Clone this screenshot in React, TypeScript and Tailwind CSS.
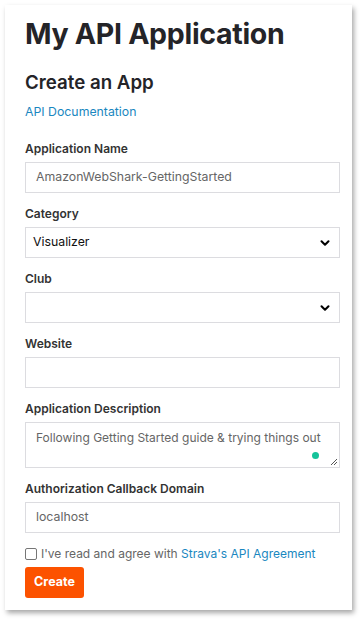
import { ChevronDown } from "lucide-react";

const Label = ({ children }: { children: React.ReactNode }) => (
  <label className="block text-[12px] leading-5 font-semibold text-[#333] mb-[3px]">{children}</label>
);

const Field = ({ label, children }: { label: string; children: React.ReactNode }) => (
  <div className="mb-[11px]">
    <Label>{label}</Label>
    {children}
  </div>
);

const inputCls =
  "w-full h-[31px] border border-[#dcdce0] bg-white px-[10px] text-[12.3px] text-[#666] flex items-center";

export default function App() {
  return (
    <div className="min-h-screen bg-white p-[5px] font-['Inter',sans-serif]">
      <div className="w-[347px] bg-white shadow-[2px_3px_5px_rgba(0,0,0,0.35)] pl-5 pr-[12px] pt-[11px] pb-[12px]">
        <h1 className="text-[28.5px] leading-9 font-bold text-[#242428] tracking-[-0.3px]">My API Application</h1>
        <h2 className="mt-[19px] text-[18.7px] leading-6 font-semibold text-[#242428]">Create an App</h2>
        <a className="block mt-[7px] text-[12.3px] leading-5 text-[#1a87c0]">API Documentation</a>

        <div className="mt-[17px]">
          <Field label="Application Name">
            <div className={inputCls}>AmazonWebShark-GettingStarted</div>
          </Field>
          <Field label="Category">
            <div className={`${inputCls} justify-between !px-[7px] !text-[#111]`}>
              <span>Visualizer</span>
              <ChevronDown size={14} strokeWidth={3.5} className="text-black" />
            </div>
          </Field>
          <Field label="Club">
            <div className={`${inputCls} justify-end !px-[7px]`}>
              <ChevronDown size={14} strokeWidth={3.5} className="text-black" />
            </div>
          </Field>
          <Field label="Website">
            <div className={inputCls}></div>
          </Field>
          <Field label="Application Description">
            <div className="relative w-full h-[46px] border border-[#dcdce0] bg-white px-[10px] pt-[6px] text-[12px] text-[#666] whitespace-nowrap">
              Following Getting Started guide &amp; trying things out
              <span className="absolute right-[20px] bottom-[8px] w-[7px] h-[7px] rounded-full bg-[#15c39a]" />
              <svg className="absolute right-[1px] bottom-[1px]" width="9" height="9" viewBox="0 0 9 9">
                <path d="M8 2L2 8M8 5L5 8" stroke="#555" strokeWidth="1" />
              </svg>
            </div>
          </Field>
          <Field label="Authorization Callback Domain">
            <div className={inputCls}>localhost</div>
          </Field>
        </div>

        <div className="flex items-center mt-[1px] text-[12px] leading-5 text-[#666] whitespace-nowrap">
          <span className="w-[12px] h-[12px] border border-[#767676] rounded-[2px] mr-[4px]" />
          <span>
            I've read and agree with <a className="text-[#1a87c0]">Strava's API Agreement</a>
          </span>
        </div>
        <button className="mt-[3px] h-[31px] w-[59px] rounded-[3px] bg-[#fc5200] text-white text-[12.5px] font-bold">
          Create
        </button>
      </div>
    </div>
  );
}
